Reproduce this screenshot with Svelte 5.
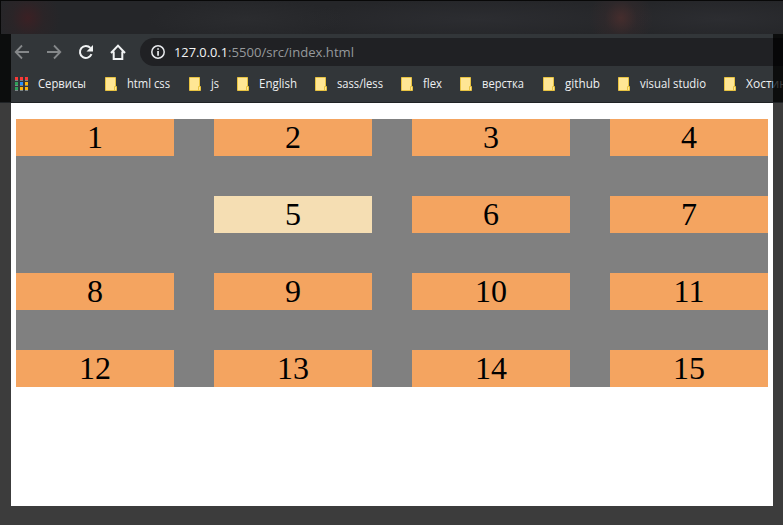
<script>
  // slot: distance to the next bookmark, length: width of the label
  const bookmarks = [
    { label: 'html css', slot: 84, length: 43 },
    { label: 'js', slot: 48, length: 8 },
    { label: 'English', slot: 78, length: 38 },
    { label: 'sass/less', slot: 86, length: 46 },
    { label: 'flex', slot: 59, length: 19 },
    { label: 'верстка', slot: 83, length: 42 },
    { label: 'github', slot: 75, length: 35 },
    { label: 'visual studio', slot: 106, length: 66 },
    { label: 'Хостинг', slot: 80, length: 46 },
  ];
  const dots = ['#f93a37', '#f93a37', '#f93a37', '#2fa15a', '#2490ff', '#fbb40a', '#2fa15a', '#fbb40a', '#fbb40a'];
  const cells = Array.from({ length: 15 }, (_, i) => i + 1);
</script>

<div class="screen">
  <div class="tabs"></div>
  <div class="browser">
    <div class="toolbar">
      <svg class="nav" width="129" height="32" viewBox="0 0 129 32" fill="none">
        <path d="M18 18H5M11 11.5L4.7 18l6.3 6.5" stroke="#85888a" stroke-width="1.8" />
        <path d="M36 18h13M43 11.5l6.3 6.5-6.3 6.5" stroke="#85888a" stroke-width="1.8" />
        <path d="M79.4 13.9A6 6 0 1 0 80.5 20.2" stroke="#f1f3f4" stroke-width="2" />
        <path d="M82 10.9v6.5h-6.5z" fill="#f1f3f4" />
        <path d="M100 19L107 11.6L114 19M102.7 17.5v7.6h8.6v-7.6" stroke="#f1f3f4" stroke-width="2" />
      </svg>
      <div class="address">
        <svg class="info" width="14" height="14" viewBox="0 0 14 14">
          <circle cx="7" cy="7" r="6.2" fill="none" stroke="#e8eaed" stroke-width="1.5" />
          <path d="M6.2 3.2h1.7v1.6H6.2zM6.2 6h1.7v4.8H6.2z" fill="#e8eaed" />
        </svg>
        <svg class="url" width="200" height="28">
          <text x="0" y="19" fill="#f4f5f6" textLength="54" lengthAdjust="spacingAndGlyphs">127.0.0.1</text>
          <text x="54" y="19" fill="#96999c" textLength="126" lengthAdjust="spacingAndGlyphs">:5500/src/index.html</text>
        </svg>
      </div>
    </div>

    <div class="bookmarks">
      <div class="services">
        <div class="dots">
          {#each dots as color}
            <i style:background={color}></i>
          {/each}
        </div>
        <svg class="label" width="60" height="20">
          <text x="0" y="14" textLength="48" lengthAdjust="spacingAndGlyphs">Сервисы</text>
        </svg>
      </div>
      {#each bookmarks as item}
        <div class="bookmark" style:width="{item.slot}px">
          <svg class="folder" width="12" height="14" viewBox="0 0 12 14">
            <path d="M.5.5h10v9h1v4H.5z" fill="#ffe694" stroke="#e8c341" />
            <path d="M9.5 13V9.5h1.5" fill="none" stroke="#e8c341" />
          </svg>
          <svg class="label" width={item.length + 2} height="20">
            <text x="0" y="14" textLength={item.length} lengthAdjust="spacingAndGlyphs">{item.label}</text>
          </svg>
        </div>
      {/each}
    </div>
    <div class="shade left"></div>
    <div class="shade right"></div>
  </div>

  <main class="page">
    <div class="grid">
      {#each cells as n}
        <div class="cell" class:shifted={n === 5}>{n}</div>
      {/each}
    </div>
  </main>
</div>

<style>
  :global(body) {
    margin: 0;
    overflow: hidden;
  }
  .screen {
    width: 783px;
    height: 525px;
    overflow: hidden;
    box-sizing: border-box;
    background: #3c3c3c;
  }
  .tabs {
    height: 34px;
    box-sizing: border-box;
    border-top: 1px solid #080808;
    border-left: 1px solid #080808;
    background:
      radial-gradient(ellipse 32px 34px at 27px 17px, #3b2024 0%, #30232680 50%, transparent 100%),
      radial-gradient(ellipse 32px 34px at 620px 17px, #452d2d 0%, #35292b80 50%, transparent 100%),
      radial-gradient(ellipse 100px 20px at 245px 18px, #2b2c2f, transparent),
      radial-gradient(ellipse 180px 20px at 475px 18px, #2c2d31, transparent),
      radial-gradient(ellipse 120px 20px at 720px 18px, #2c2d31, transparent),
      #252629;
  }
  .browser {
    position: relative;
    height: 69px;
    box-sizing: border-box;
    overflow: hidden;
    padding-left: 11px;
    background: #323639;
    border-bottom: 1px solid #202326;
    font-family: "Open Sans", "Noto Sans", sans-serif;
  }
  .toolbar {
    display: flex;
    height: 32px;
  }
  .nav {
    flex: none;
  }
  .address {
    display: flex;
    align-items: center;
    flex: 1;
    height: 28px;
    margin-top: 4px;
    padding-left: 11px;
    border-radius: 14px 0 0 14px;
    background: #202124;
  }
  .url {
    margin-left: 9px;
    font-size: 13.5px;
  }
  .bookmarks {
    display: flex;
    align-items: center;
    width: 900px;
    height: 36px;
    padding-left: 4px;
  }
  .services {
    display: flex;
    align-items: center;
    flex: none;
    width: 90px;
  }
  .dots {
    display: grid;
    flex: none;
    grid-template-columns: repeat(3, 3px);
    grid-auto-rows: 4px;
    gap: 1px 2px;
    width: 23px;
  }
  .dots i {
    box-sizing: border-box;
    border-bottom: 1px solid #7c8587;
  }
  .bookmark {
    display: flex;
    align-items: center;
    flex: none;
    gap: 10px;
  }
  .folder {
    flex: none;
  }
  .label {
    flex: none;
    overflow: visible;
    font-size: 12px;
    fill: #eef0f2;
  }
  .shade {
    position: absolute;
    top: 0;
    bottom: -1px;
    background: rgba(0, 0, 0, 0.76);
  }
  .left {
    left: 0;
    width: 11px;
  }
  .right {
    right: 0;
    width: 10px;
  }
  .page {
    width: 762px;
    height: 403px;
    box-sizing: border-box;
    margin-left: 11px;
    padding: 16px 5px;
    background: #fff;
  }
  .grid {
    display: grid;
    grid-template-columns: repeat(4, 1fr);
    grid-auto-rows: 37px;
    gap: 40px;
    background: #808080;
    color: #000;
    font: 32px/37px "Liberation Serif", "Times New Roman", serif;
    text-align: center;
  }
  .cell {
    background: #f4a460;
  }
  .shifted {
    grid-column: 2;
    background: #f5deb3;
  }
</style>
